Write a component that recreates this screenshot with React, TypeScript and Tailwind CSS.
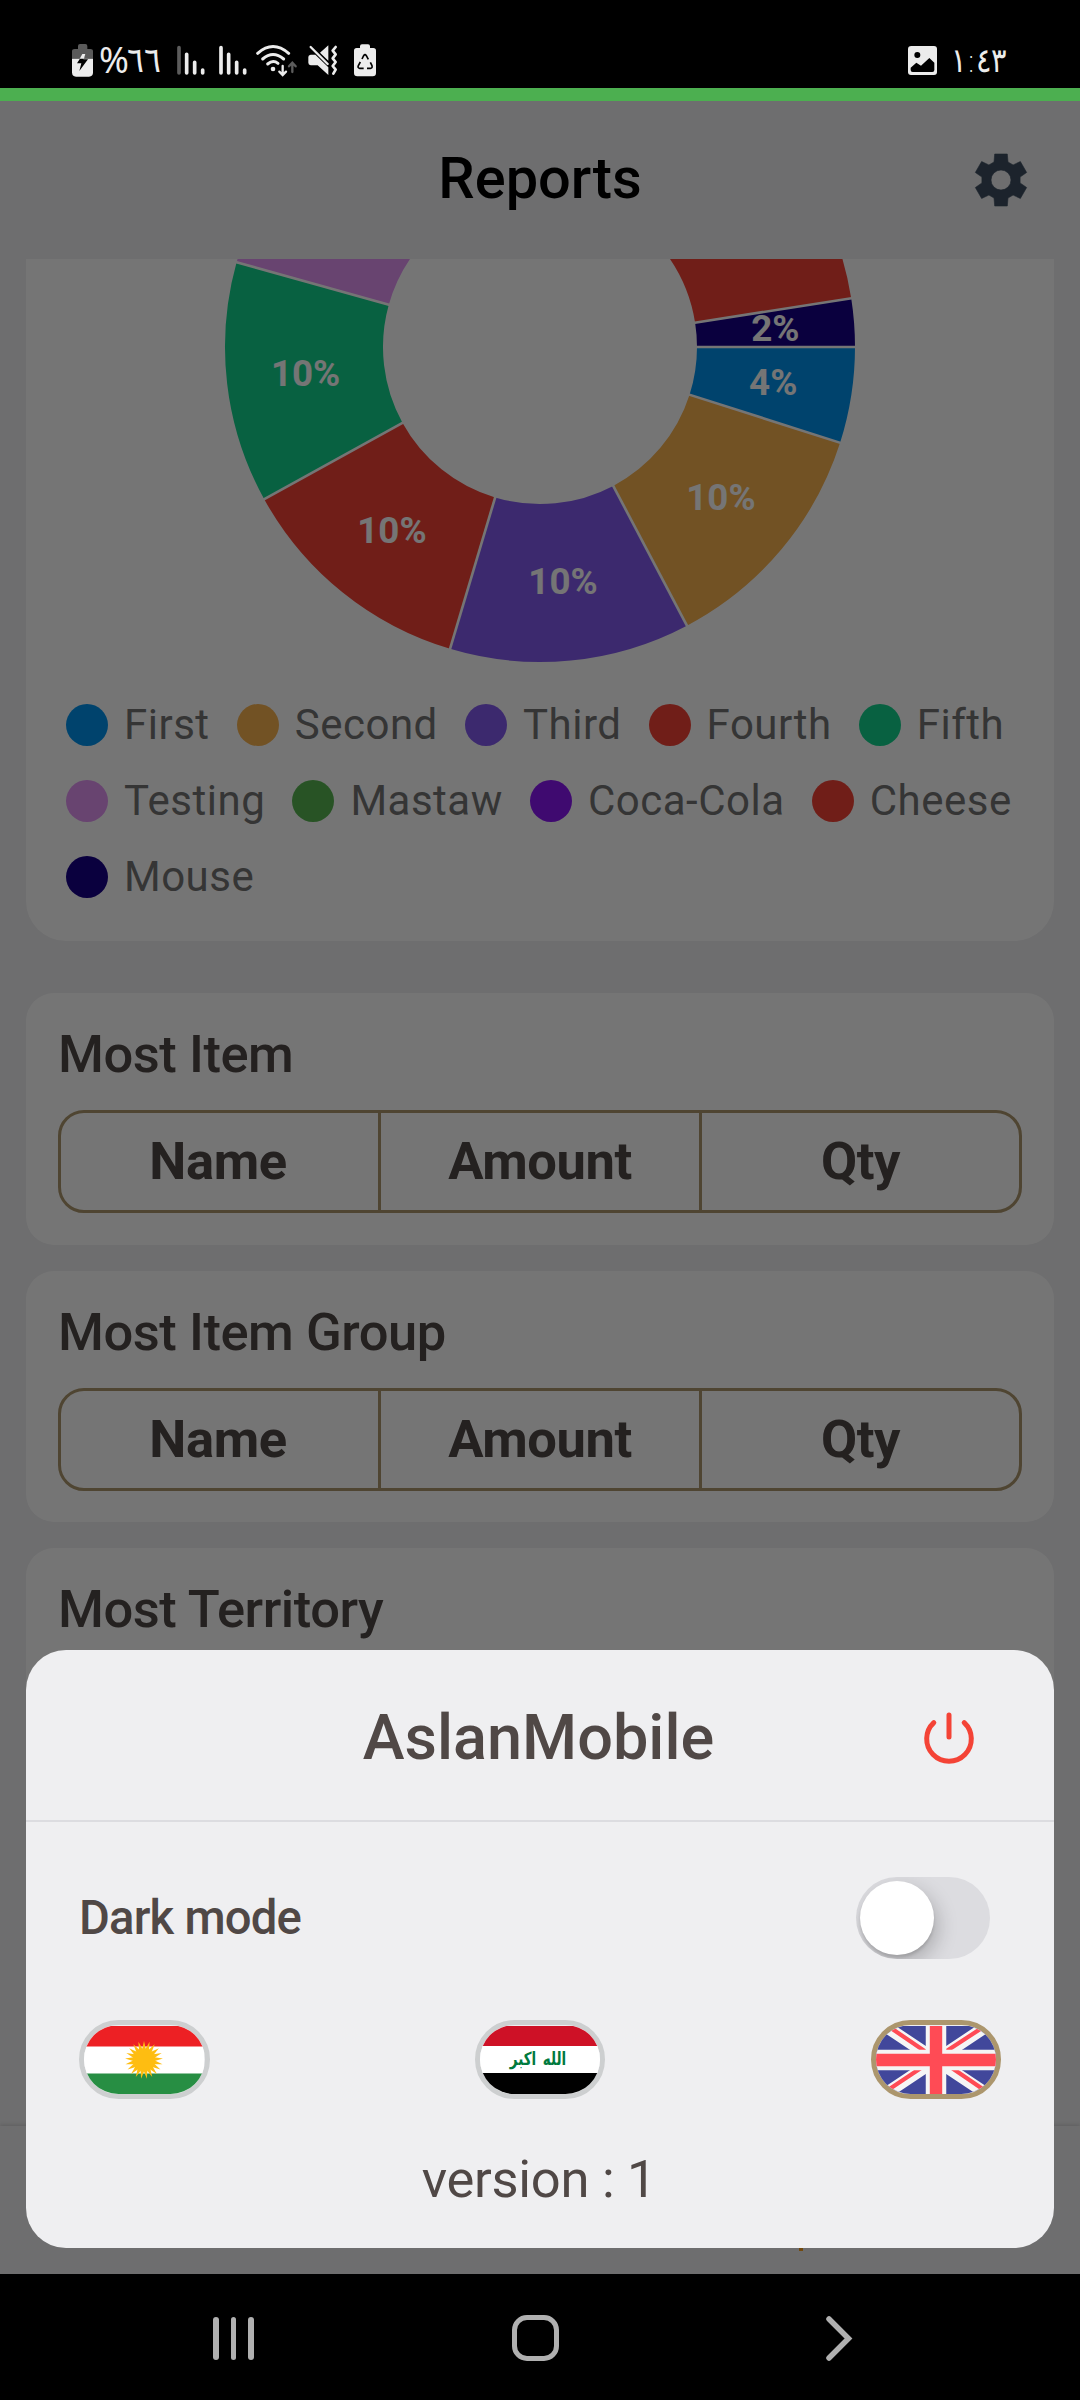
import type { ReactNode } from "react";

const CX = 514;
const CY = 88;
const OUTER = 315;
const INNER = 157;

type Slice = { from: number; to: number; color: string; label?: string };

const slices: Slice[] = [
  { from: 0, to: 17.7, color: "#0293ee", label: "4%" },
  { from: 17.7, to: 62.2, color: "#f8b250", label: "10%" },
  { from: 62.2, to: 106.6, color: "#845bef", label: "10%" },
  { from: 106.6, to: 151.1, color: "#f44336", label: "10%" },
  { from: 151.1, to: 195.6, color: "#13d38e", label: "10%" },
  { from: 195.6, to: 240, color: "#e294f5" },
  { from: 300, to: 351.1, color: "#f44336" },
  { from: 351.1, to: 360, color: "#170088", label: "2%" },
];

const polar = (deg: number, r: number) => {
  const a = (deg * Math.PI) / 180;
  return [CX + r * Math.cos(a), CY + r * Math.sin(a)];
};

function slicePath({ from, to }: Slice) {
  const [x1, y1] = polar(from, OUTER);
  const [x2, y2] = polar(to, OUTER);
  const [x3, y3] = polar(to, INNER);
  const [x4, y4] = polar(from, INNER);
  return `M${x1} ${y1}A${OUTER} ${OUTER} 0 0 1 ${x2} ${y2}L${x3} ${y3}A${INNER} ${INNER} 0 0 0 ${x4} ${y4}Z`;
}

function DonutChart() {
  return (
    <svg width="1028" height="404" viewBox="0 0 1028 404" className="block">
      {slices.map((s) => (
        <path key={s.from} d={slicePath(s)} fill={s.color} />
      ))}
      {slices.map((s) => {
        const [x1, y1] = polar(s.from, INNER - 2);
        const [x2, y2] = polar(s.from, OUTER + 2);
        return <line key={s.from} x1={x1} y1={y1} x2={x2} y2={y2} stroke="#fff" strokeWidth="2.6" />;
      })}
      {slices.map((s) => {
        const [x, y] = polar((s.from + s.to) / 2, (OUTER + INNER) / 2);
        return (
          <text key={s.from} x={x} y={y + 11.9} textAnchor="middle" fill="#fff" className="text-[36.75px] font-bold">
            {s.label}
          </text>
        );
      })}
    </svg>
  );
}

const legend = [
  ["First", "bg-[#0293ee]"],
  ["Second", "bg-[#f8b250]"],
  ["Third", "bg-[#845bef]"],
  ["Fourth", "bg-[#f44336]"],
  ["Fifth", "bg-[#13d38e]"],
  ["Testing", "bg-[#e294f5]"],
  ["Mastaw", "bg-[#57b652]"],
  ["Coca-Cola", "bg-[#8a16f5]"],
  ["Cheese", "bg-[#f44336]"],
  ["Mouse", "bg-[#170088]"],
];

function Legend() {
  return (
    <div className="mt-[36.5px] flex flex-wrap gap-x-[27.2px] gap-y-[26.2px] pl-[40px]">
      {legend.map(([name, color]) => (
        <div key={name} className="flex h-[50px] items-center gap-[16px]">
          <span className={`size-[42px] rounded-full ${color}`} />
          <span className="text-[42px] leading-[50px] tracking-[0.5px] text-[#757575]">{name}</span>
        </div>
      ))}
    </div>
  );
}

function ReportCard({ title, collapsed }: { title: string; collapsed?: boolean }) {
  return (
    <section className="mb-[26px] h-[251.5px] rounded-[28px] bg-white px-[32px] pt-[30px] text-[52.5px] text-[#504846]">
      <h2 className="mb-[25px] h-[62px] leading-[62px] font-medium tracking-[-0.45px]">{title}</h2>
      {!collapsed && (
        <div className="grid h-[103px] grid-cols-[320px_321px_1fr] divide-x-3 divide-[#ac966d] rounded-[26px] border-3 border-[#ac966d] text-center leading-[96px] font-bold tracking-[-0.4px]">
          <span className="pr-[3px]">Name</span>
          <span>Amount</span>
          <span>Qty</span>
        </div>
      )}
    </section>
  );
}

function GearIcon() {
  const tooth = [[-7, -18], [-6.3, -26], [6.3, -26], [7, -18]];
  const pts = [0, 60, 120, 180, 240, 300].flatMap((deg) => {
    const a = (deg * Math.PI) / 180;
    return tooth.map(([x, y]) => [x * Math.cos(a) - y * Math.sin(a), x * Math.sin(a) + y * Math.cos(a)]);
  });
  const d = "M" + pts.map((p) => p.join(" ")).join("L") + "Z";
  return (
    <svg width="54" height="54" viewBox="-27 -27 54 54">
      <path
        d={d + "M10 0A10 10 0 1 0 -10 0A10 10 0 1 0 10 0Z"}
        fill="#3d4e60"
        fillRule="evenodd"
        stroke="#3d4e60"
        strokeWidth="0.6"
        strokeLinejoin="round"
      />
    </svg>
  );
}

const INK = "#ececec";

/* Status icons are drawn on a grid of three units per pixel. */
function Glyph({ w, children, className = "" }: { w: number; children: ReactNode; className?: string }) {
  return (
    <svg width={w} height="36" viewBox={`0 0 ${w * 3} 108`} className={`shrink-0 ${className}`}>
      {children}
    </svg>
  );
}

function Signal({ dim }: { dim?: boolean }) {
  return (
    <Glyph w={28}>
      <g strokeWidth="11" strokeLinecap="round" stroke={INK}>
        <path d="M6 17V93" stroke={dim ? "#5c5c5c" : INK} />
        <path d="M29 37V93M53 61V93M77 84V93" />
      </g>
    </Glyph>
  );
}

function StatusBar() {
  return (
    <div className="flex h-[88px] items-start justify-between bg-black pt-[42px] pr-[72px] pl-[72px] text-[#ececec]">
      <div className="flex h-[36px] items-center">
        <Glyph w={22}>
          <path d="M0 50V28Q0 21 8 21H18V12Q18 6 24 6H40Q46 6 46 12V21H55Q63 21 63 28V50Z" fill="#5a5a5a" />
          <path d="M0 50H63V91Q63 104 51 104H12Q0 104 0 91Z" fill={INK} />
          <path d="M33 36L15 64H28L22 87L48 52H34L40 36Z" fill="#000" />
          <path d="M31 36H40L36 50H23Z" fill={INK} />
        </Glyph>
        <div className="ml-[5px] flex w-[63px] items-center">
          <span className="w-[28px] font-['Noto_Sans'] text-[36px] leading-[36px] tracking-[-2px]">%</span>
          <span className="origin-left scale-x-[0.9] font-['DejaVu_Sans',sans-serif] text-[35px] leading-[36px] font-extralight">٦٦</span>
        </div>
        <div className="ml-[15px] flex gap-[14px]">
          <Signal dim />
          <Signal />
        </div>
        <Glyph w={42} className="ml-[9px]">
          <g fill="none" stroke={INK} strokeWidth="9" strokeLinecap="round">
            <path d="M5 34Q51 -7 98 34" />
            <path d="M20 51Q51 24 83 51" />
            <path d="M35 66Q51 52 66 64" />
            <path d="M80 72V97M70 89L80 99L90 89" strokeWidth="7" />
            <path d="M109 90V64M99 73L109 62L119 73" stroke="#5c5c5c" strokeWidth="7" />
          </g>
          <circle cx="51" cy="81" r="7" fill={INK} />
        </Glyph>
        <Glyph w={31} className="ml-[10px]">
          <path d="M1 45Q1 39 8 38L22 38L61 76V99L29 70H8Q1 69 1 62ZM36 32L61 10V56Z" fill={INK} />
          <path d="M8 15L59 66" stroke={INK} strokeWidth="7" strokeLinecap="round" />
          <path d="M83 15L74 26L83 37L74 49L83 60L74 72L83 83L76 95" stroke={INK} strokeWidth="8" fill="none" strokeLinejoin="round" strokeLinecap="round" />
        </Glyph>
        <Glyph w={22} className="ml-[15px]">
          <path d="M0 26Q0 18 8 18H18V13Q18 7 24 7H42Q48 7 48 13V18H58Q66 18 66 26V93Q66 103 56 103H10Q0 103 0 93Z" fill={INK} />
          <g fill="none" stroke="#000" strokeWidth="5" strokeLinejoin="round">
            <path d="M24 51L29 41Q33 35 37 41L43 52" />
            <path d="M49 61L54 71Q56 79 49 79H39" />
            <path d="M29 79H17Q10 78 13 71L19 60" />
          </g>
        </Glyph>
      </div>
      <div className="flex h-[36px] items-center">
        <Glyph w={30}>
          <path d="M10 12H78Q87 12 87 21V90Q87 99 78 99H9Q0 99 0 90V21Q0 12 10 12Z" fill={INK} />
          <circle cx="28" cy="39" r="9" fill="#000" />
          <path d="M8 77L25 62L39 71L64 48L79 62V84Q79 90 73 90H14Q8 90 8 84Z" fill="#000" />
        </Glyph>
        <div className="-mr-[2px] ml-[13px] w-[59px] origin-left scale-x-[0.85] font-['DejaVu_Sans',sans-serif] text-[34px] leading-[36px] font-extralight whitespace-nowrap">
          ١:٤٣
        </div>
      </div>
    </div>
  );
}

function KurdistanFlag() {
  const rays = Array.from({ length: 21 }, (_, i) => (i * 360) / 21);
  return (
    <svg width="120" height="68" viewBox="0 0 120 68">
      <rect width="120" height="68" fill="#fff" />
      <rect width="120" height="20.5" fill="#ed2024" />
      <rect y="47.5" width="120" height="20.5" fill="#278e43" />
      <g fill="#febd11" transform="translate(60 34)">
        {rays.map((r) => (
          <path key={r} d="M-2.3 -9L0 -19L2.3 -9Z" transform={`rotate(${r})`} />
        ))}
        <circle r="11" />
      </g>
    </svg>
  );
}

function IraqFlag() {
  return (
    <div className="flex h-[68px] w-[120px] flex-col bg-white">
      <div className="h-[20.5px] bg-[#ce1126]" />
      <div
        className="flex-1 -translate-x-[2px] -translate-y-px scale-y-[1.35] text-center font-['DejaVu_Sans',sans-serif] text-[13.5px] leading-[26px] font-bold text-[#007a3d] [word-spacing:2px]"
        dir="rtl"
      >
        الله اكبر
      </div>
      <div className="h-[20.5px] bg-black" />
    </div>
  );
}

function UnionFlag() {
  return (
    <svg width="120" height="68" viewBox="0 0 120 68">
      <rect width="120" height="68" fill="#41479b" />
      <path d="M6 -2L114 70M114 -2L6 70" stroke="#f5f5f5" strokeWidth="12" />
      <path d="M9 -2L50 26M112 -2L66 28M6 68L54 36M70 38L114 68" stroke="#ff4b55" strokeWidth="4.2" />
      <path d="M60 0V68M0 34H120" stroke="#f5f5f5" strokeWidth="20.5" />
      <path d="M60 0V68M0 34H120" stroke="#ff4b55" strokeWidth="12.4" />
    </svg>
  );
}

function FlagButton({ active, children }: { active?: boolean; children: ReactNode }) {
  return (
    <button
      className={`flex h-[79px] w-[130.5px] items-center justify-center overflow-hidden rounded-full border-[5.25px] ${
        active ? "border-[#ac966d]" : "border-[#cdcfd0]"
      }`}
    >
      {children}
    </button>
  );
}

function SettingsSheet() {
  return (
    <div className="absolute top-[1650px] left-[26px] flex h-[598px] w-[1028px] flex-col rounded-[40px] bg-[#efeff1] text-[#504846]">
      <div className="grid h-[171.5px] grid-cols-[130px_1fr_130px] items-center border-b-2 border-[#dcdce0]">
        <h3 className="col-start-2 mt-[6px] mr-[3px] text-center text-[63px] leading-[74px] font-medium">AslanMobile</h3>
        <svg width="56" height="56" viewBox="0 0 56 56" className="mt-[6px] ml-[-3px]" fill="none" stroke="#f44336" strokeWidth="5" strokeLinecap="round">
          <path d="M28 5V27M12.8 12.6A22.3 22.3 0 1 0 43.2 12.6" />
        </svg>
      </div>
      <div className="mt-[55.5px] flex h-[82px] items-center justify-between pr-[64px] pl-[53px]">
        <span className="text-[47.25px] leading-[56px] font-medium tracking-[-0.8px]">Dark mode</span>
        <div className="flex h-[82px] w-[134px] items-center overflow-hidden rounded-full bg-[#dcdce0] pl-[4px]">
          <span className="size-[74px] rounded-full bg-white shadow-[4px_8px_20px_rgba(0,0,0,0.22),0_3px_3px_rgba(0,0,0,0.12)]" />
        </div>
      </div>
      <div className="mt-[61px] flex justify-between pr-[53px] pl-[53px]">
        <FlagButton>
          <KurdistanFlag />
        </FlagButton>
        <FlagButton>
          <IraqFlag />
        </FlagButton>
        <FlagButton active>
          <UnionFlag />
        </FlagButton>
      </div>
      <div className="mt-[49px] pr-[2px] text-center text-[52.5px] leading-[62px] tracking-[-0.3px]">version : 1</div>
    </div>
  );
}

function SystemNav() {
  return (
    <nav className="relative flex h-[126px] items-center bg-black pt-[2px] pl-[213px]">
      <div className="flex gap-[12px]">
        <span className="h-[43px] w-[5.5px] rounded-full bg-[#b0b0b0]" />
        <span className="h-[43px] w-[5.5px] rounded-full bg-[#b0b0b0]" />
        <span className="h-[43px] w-[5.5px] rounded-full bg-[#b0b0b0]" />
      </div>
      <span className="ml-[258.5px] size-[46.5px] rounded-[15px] border-[5.5px] border-[#b0b0b0]" />
      <svg width="32" height="50" viewBox="0 0 32 50" className="ml-[264px]" fill="none" stroke="#b0b0b0" strokeWidth="5.5" strokeLinecap="round" strokeLinejoin="miter">
        <path d="M6 6L25.5 25.5L6 45" />
      </svg>
    </nav>
  );
}

export default function App() {
  return (
    <div className="relative h-[2400px] w-[1080px] overflow-hidden bg-black font-['Roboto',sans-serif]">
      <StatusBar />
      <div className="h-[13px] bg-[#4caf50]" />
      <div className="relative h-[2173px] overflow-hidden bg-[#efeff1]">
        <header className="grid h-[158px] grid-cols-[158px_1fr_158px] items-center">
          <h1 className="col-start-2 -mt-[5px] text-center text-[57.75px] leading-[68px] font-medium text-black">Reports</h1>
          <div className="flex justify-center">
            <GearIcon />
          </div>
        </header>
        <main className="mx-[26px]">
          <section className="mb-[52px] h-[682px] rounded-b-[40px] bg-white">
            <DonutChart />
            <Legend />
          </section>
          <ReportCard title="Most Item" />
          <ReportCard title="Most Item Group" />
          <ReportCard title="Most Territory" collapsed />
        </main>
        <footer className="absolute inset-x-0 bottom-0 h-[148px] bg-[#efeff1] shadow-[0_-1px_4px_rgba(0,0,0,0.15)]">
          <span className="absolute bottom-[23.5px] left-[799px] h-[4px] w-[4px] bg-[#f8a020]" />
        </footer>
        <div className="absolute inset-0 bg-black/54" />
      </div>
      <SystemNav />
      <SettingsSheet />
    </div>
  );
}
